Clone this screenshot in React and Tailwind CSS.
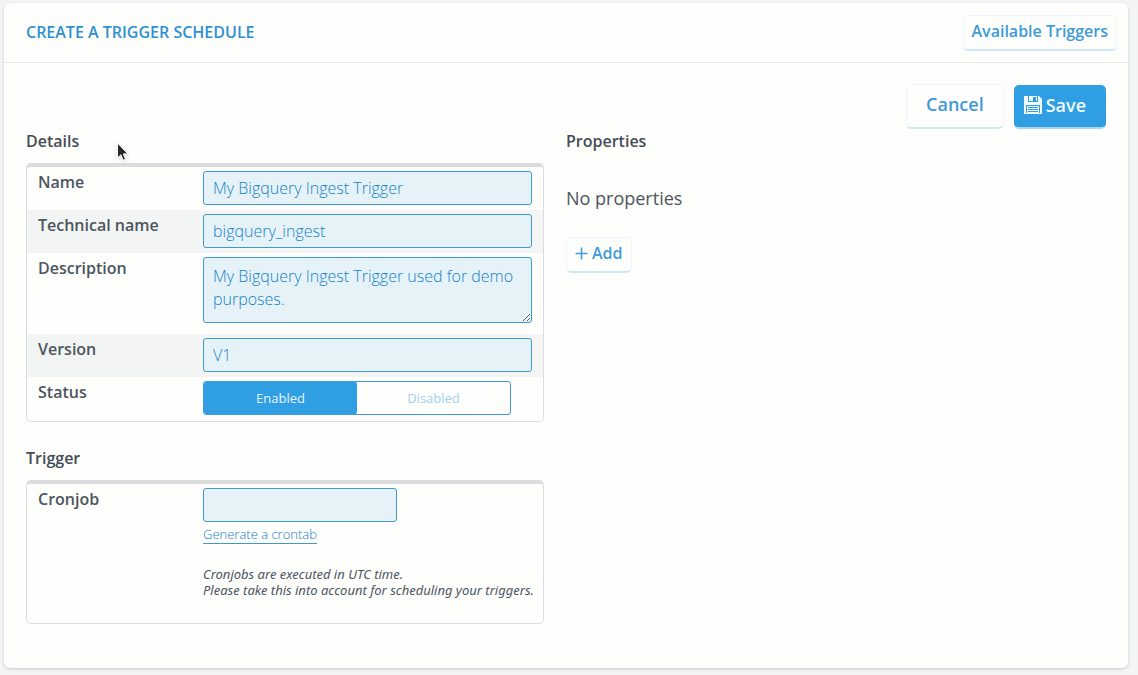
import { useState } from 'react';

export default function App() {
  return (
    <div className="relative min-h-screen flex flex-col bg-[#f3f5f4] pt-[3px] pl-1 pr-[10px] pb-[7px] font-['Open_Sans',sans-serif] text-base text-[#4d555e]">
      <main className="grow rounded-md bg-[#fefefd] shadow-[0_1px_3px_rgba(60,70,110,0.25)]">
        <header className="flex items-center justify-between h-[60px] pl-[22px] pr-[11px] border-b border-[#e8eaea]">
          <h1 className="pb-[2px] font-semibold text-[#2f90d2]">CREATE A TRIGGER SCHEDULE</h1>
          <OutlineButton>Available Triggers</OutlineButton>
        </header>

        <div className="px-[22px] pt-[21px]">
          <div className="flex justify-end gap-[10px]">
            <OutlineButton large>Cancel</OutlineButton>
            <button
              type="button"
              className="flex items-center gap-1 h-11 mt-px pl-[10px] pr-5 pb-[2px] rounded-[5px] border-b-2 border-[#a5d6f3] bg-[#2f9ee2] text-lg font-semibold text-[#f0faff]"
            >
              <SaveIcon />
              Save
            </button>
          </div>

          <div className="grid grid-cols-2">
            <div className="pr-[22px]">
              <DetailsPanel />
              <TriggerPanel />
            </div>
            <PropertiesPanel />
          </div>
        </div>
      </main>
      <Pointer />
    </div>
  );
}

function DetailsPanel() {
  const [status, setStatus] = useState('enabled');

  return (
    <section>
      <h2 className="h-[34px] leading-6 font-semibold text-[#454c54]">Details</h2>
      <Box>
        <Row label="Name" htmlFor="name">
          <TextInput id="name" defaultValue="My Bigquery Ingest Trigger" />
        </Row>
        <Row label="Technical name" htmlFor="technical-name" striped>
          <TextInput id="technical-name" defaultValue="bigquery_ingest" />
        </Row>
        <Row label="Description" htmlFor="description">
          <textarea
            id="description"
            className="block w-full h-[66px] mb-[7px] px-[9px] py-[7px] leading-[23px] rounded-[3px] border border-[#3f9ac6] bg-[#e5f3f9] font-light text-[#1580c8] resize"
            defaultValue="My Bigquery Ingest Trigger used for demo purposes."
          />
        </Row>
        <Row label="Version" htmlFor="version" striped>
          <TextInput id="version" defaultValue="V1" />
        </Row>
        <Row label="Status">
          <div
            role="radiogroup"
            aria-label="Status"
            className="flex w-[308px] h-[34px] rounded-[3px] border border-[#3f9bd8] text-[13px]"
          >
            <ToggleOption label="Enabled" active={status === 'enabled'} onSelect={() => setStatus('enabled')} />
            <ToggleOption label="Disabled" active={status === 'disabled'} onSelect={() => setStatus('disabled')} />
          </div>
        </Row>
      </Box>
    </section>
  );
}

function TriggerPanel() {
  return (
    <section className="pt-6">
      <h2 className="h-[34px] leading-6 font-semibold text-[#454c54]">Trigger</h2>
      <Box>
        <Row label="Cronjob" htmlFor="cronjob">
          <div className="w-[194px]">
            <TextInput id="cronjob" />
          </div>
          <a
            href="#crontab"
            className="block w-fit mt-1 leading-[17px] text-[13px] font-light text-[#1580c8] border-b border-[#3f9ac6]"
          >
            Generate a crontab
          </a>
          <p className="mt-[22px] mb-5 font-['Noto_Sans',sans-serif] text-[13px] leading-4 italic whitespace-nowrap">
            Cronjobs are executed in UTC time.
            <br />
            Please take this into account for scheduling your triggers.
          </p>
        </Row>
      </Box>
    </section>
  );
}

function PropertiesPanel() {
  return (
    <section>
      <h2 className="h-[34px] leading-6 font-semibold text-[#454c54]">Properties</h2>
      <p className="mt-[21px] mb-[25px] text-lg leading-7">No properties</p>
      <OutlineButton>
        <PlusIcon />
        Add
      </OutlineButton>
    </section>
  );
}

function Box({ children }) {
  return (
    <div className="pb-px rounded-[5px] border border-t-4 border-[#dadcdd]">
      {children}
    </div>
  );
}

function Row({ label, htmlFor, striped, children }) {
  const Label = htmlFor ? 'label' : 'span';
  return (
    <div className={`flex min-h-[43px] py-1 px-[11px] ${striped ? 'bg-[#f2f5f3]' : ''}`}>
      <Label htmlFor={htmlFor} className="shrink-0 w-[165px] leading-[22px] font-semibold">{label}</Label>
      <div className="grow min-w-0">{children}</div>
    </div>
  );
}

function TextInput(props) {
  return (
    <input
      type="text"
      className="block w-full h-[34px] px-[9px] rounded-[3px] border border-[#3f9ac6] bg-[#e5f3f9] font-light text-[#1580c8]"
      {...props}
    />
  );
}

function ToggleOption({ label, active, onSelect }) {
  return (
    <label
      className={`flex-1 flex items-center justify-center pt-[2px] rounded-[2px] cursor-pointer
        ${active ? 'bg-[#2f9ee2] text-[#e6f7ff]' : 'text-[#9fd2ef]'}`}
    >
      <input type="radio" name="status" className="sr-only" checked={active} onChange={onSelect} />
      {label}
    </label>
  );
}

function OutlineButton({ large, children }) {
  return (
    <button
      type="button"
      className={`flex items-center gap-1 rounded-[5px] border border-b-2 border-[#edf6fb] border-b-[#cfe8f5] font-semibold text-[#3f9ad8]
        ${large ? 'h-[45px] px-[19px] pb-1 text-lg' : 'h-9 px-2 pb-[3px]'}`}
    >
      {children}
    </button>
  );
}

function SaveIcon() {
  return (
    <svg width="18" height="18" viewBox="0 0 18 18" aria-hidden="true">
      <path fill="#f0faff" d="M0 0h15l3 3v15H0z" />
      <path fill="#2f9ee2" d="M4 0h1v6H4zM9 1h3v4H9zM13 0h1v6H4V5h9zM2 9h14v8H2z" />
      <path fill="#f0faff" d="M3 10h12v7H3z" />
      <path fill="#2f9ee2" d="M4 11h10v1H4zM4 13h10v1H4zM4 15h10v1H4z" />
    </svg>
  );
}

function PlusIcon() {
  return (
    <svg width="13" height="13" viewBox="0 0 13 13" aria-hidden="true">
      <path stroke="#459dd8" strokeWidth="1.6" d="M6.5 0.5v12M0.5 6.5h12" />
    </svg>
  );
}

function Pointer() {
  return (
    <svg
      className="absolute left-[116px] top-[142px] pointer-events-none drop-shadow-sm"
      width="13"
      height="20"
      viewBox="0 0 13 20"
      aria-hidden="true"
    >
      <path
        fill="#24282b"
        stroke="#fff"
        strokeWidth="1"
        d="M1.5 1v15l3.4-3.2 2.3 5.4 2.4-1-2.3-5.3h4.6z"
      />
    </svg>
  );
}
